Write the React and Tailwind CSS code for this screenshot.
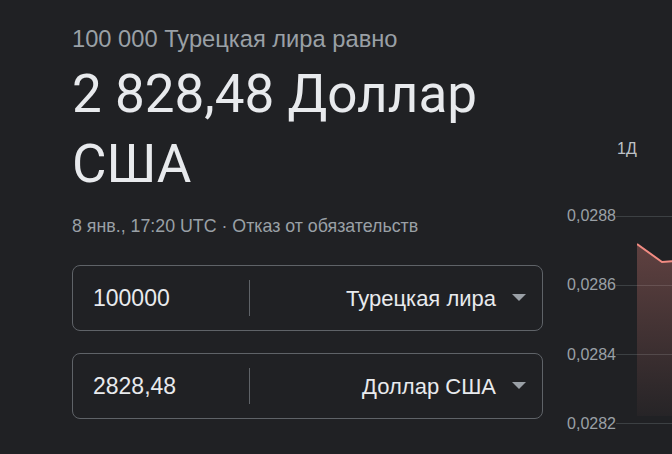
import React from "react";

function Triangle() {
  return (
    <svg width="14" height="8" viewBox="0 0 14 8" className="shrink-0">
      <path d="M0 0 L14 0 L7 7 Z" fill="#9aa0a6" />
    </svg>
  );
}

function Field({ value, currency }) {
  return (
    <div className="h-[66px] w-[471px] rounded-[8px] border border-[#5f6368] flex items-center">
      <div className="w-[176px] pl-[20px] text-[23px] text-[#e8eaed] [font-family:'Liberation_Sans',Arial,sans-serif]">
        {value}
      </div>
      <div className="w-px h-[36px] bg-[#5f6368]" />
      <div className="flex-1 flex items-center justify-end pr-[16px] gap-[16px]">
        <span className="text-[22px] text-[#e8eaed] [font-family:'Liberation_Sans',Arial,sans-serif]">
          {currency}
        </span>
        <Triangle />
      </div>
    </div>
  );
}

export default function App() {
  const labels = ["0,0288", "0,0286", "0,0284", "0,0282"];
  return (
    <div className="w-[672px] h-[454px] bg-[#202124] overflow-hidden flex">
      <div className="pl-[72px] w-[543px] shrink-0 flex flex-col">
        <div className="mt-[25px] text-[23.7px] leading-[28px] text-[#9aa0a6] [font-family:'Liberation_Sans',Arial,sans-serif]">
          100 000 Турецкая лира равно
        </div>
        <div className="mt-[6px] text-[53px] leading-[70px] text-[#e8eaed] [font-family:Roboto,sans-serif]">
          2 828,48 Доллар
          <br />
          США
        </div>
        <div className="mt-[17px] text-[17.8px] leading-[20px] text-[#9aa0a6] [font-family:'Liberation_Sans',Arial,sans-serif]">
          8 янв., 17:20 UTC · Отказ от обязательств
        </div>
        <div className="mt-[29px] flex flex-col gap-[22px]">
          <Field value="100000" currency="Турецкая лира" />
          <Field value="2828,48" currency="Доллар США" />
        </div>
      </div>
      <div className="flex-1 relative">
        <div className="mt-[139px] ml-[74px] text-[16px] leading-[20px] text-[#bdc1c6] [font-family:'Liberation_Sans',Arial,sans-serif]">
          1Д
        </div>
        <div className="mt-[47px] flex flex-col gap-[49.3px]">
          {labels.map((l) => (
            <div key={l} className="flex items-center h-[20px]">
              <span className="w-[73px] text-right text-[16px] text-[#9aa0a6] [font-family:'Liberation_Sans',Arial,sans-serif]">
                {l}
              </span>
              <div className="flex-1 h-px bg-[#3c4043]" />
            </div>
          ))}
        </div>
        <svg className="absolute left-[94px] top-[236px]" width="40" height="180" viewBox="0 0 40 180">
          <defs>
            <linearGradient id="g" x1="0" y1="0" x2="0" y2="1">
              <stop offset="0" stopColor="#f28b82" stopOpacity="0.3" />
              <stop offset="1" stopColor="#f28b82" stopOpacity="0.03" />
            </linearGradient>
          </defs>
          <path d="M0 8 L25 26 L40 25 L40 180 L0 180 Z" fill="url(#g)" />
          <path d="M0 8 L25 26 L40 25" fill="none" stroke="#f28b82" strokeWidth="2" />
        </svg>
      </div>
    </div>
  );
}
